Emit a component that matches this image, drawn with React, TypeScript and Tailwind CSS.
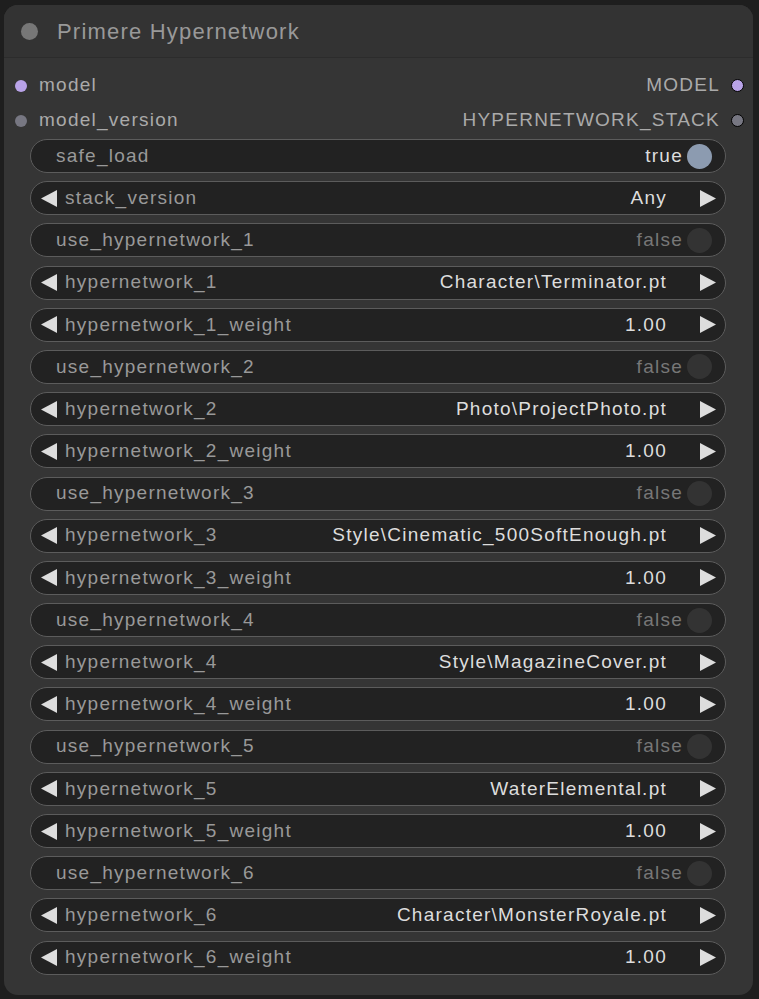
import React from "react";

type Widget =
  | { kind: "toggle"; name: string; value: boolean }
  | { kind: "combo"; name: string; value: string };

const widgets: Widget[] = [
  { kind: "toggle", name: "safe_load", value: true },
  { kind: "combo", name: "stack_version", value: "Any" },
];

for (let i = 1; i <= 6; i++) {
  const files = [
    "Character\\Terminator.pt",
    "Photo\\ProjectPhoto.pt",
    "Style\\Cinematic_500SoftEnough.pt",
    "Style\\MagazineCover.pt",
    "WaterElemental.pt",
    "Character\\MonsterRoyale.pt",
  ];
  widgets.push({ kind: "toggle", name: `use_hypernetwork_${i}`, value: false });
  widgets.push({ kind: "combo", name: `hypernetwork_${i}`, value: files[i - 1] });
  widgets.push({ kind: "combo", name: `hypernetwork_${i}_weight`, value: "1.00" });
}

function LeftArrow() {
  return (
    <svg width="17" height="17" viewBox="0 0 17 17" className="shrink-0">
      <polygon points="16,0 16,17 0,8.5" fill="#dddddd" />
    </svg>
  );
}

function RightArrow() {
  return (
    <svg width="17" height="17" viewBox="0 0 17 17" className="shrink-0">
      <polygon points="1,0 1,17 17,8.5" fill="#dddddd" />
    </svg>
  );
}

function WidgetRow({ w }: { w: Widget }) {
  if (w.kind === "toggle") {
    return (
      <div className="flex h-[34px] items-center rounded-full border border-[#5c5c5c] bg-[#222222] pl-[25px] pr-[13px]">
        <span className="flex-1 text-[#999999]">{w.name}</span>
        <span className={w.value ? "text-[#dddddd]" : "text-[#777777]"}>{w.value ? "true" : "false"}</span>
        <span
          className={
            w.value
              ? "ml-[4px] h-[25px] w-[25px] rounded-full bg-[#8c9bb0]"
              : "ml-[4px] h-[25px] w-[25px] rounded-full bg-[#333333]"
          }
        />
      </div>
    );
  }
  return (
    <div className="flex h-[34px] items-center rounded-full border border-[#5c5c5c] bg-[#222222] pl-[10px] pr-[9px]">
      <LeftArrow />
      <span className="ml-[7px] flex-1 text-[#999999]">{w.name}</span>
      <span className="mr-[32px] text-[#dddddd]">{w.value}</span>
      <RightArrow />
    </div>
  );
}

export default function App() {
  return (
    <div className="min-h-[999px] bg-[#1e1e1e] pl-[4px] pt-[5px] font-['Liberation_Sans',Arial,sans-serif] text-[19px] tracking-[1.25px]">
      <div className="h-[990px] w-[749px] overflow-hidden rounded-[14px] bg-[#353535]">
        {/* title */}
        <div className="flex h-[53px] items-center border-b border-[#2c2c2c] bg-[#333333] pl-[17px]">
          <span className="h-[17px] w-[17px] rounded-full bg-[#777777]" />
          <span className="ml-[19px] text-[22px] tracking-[1.2px] text-[#999999]">Primere Hypernetwork</span>
        </div>
        {/* slots */}
        <div className="flex flex-col pt-[10px]">
          <div className="flex h-[35px] items-center pl-[11px] pr-[9px]">
            <span className="h-[12px] w-[12px] rounded-full bg-[#b9a3e8]" />
            <span className="ml-[12px] flex-1 text-[#aaaaaa]">model</span>
            <span className="text-[#aaaaaa]">MODEL</span>
            <span className="ml-[11px] h-[13px] w-[13px] rounded-full border border-black bg-[#b9a3e8]" />
          </div>
          <div className="flex h-[35px] items-center pl-[11px] pr-[9px]">
            <span className="h-[12px] w-[12px] rounded-full bg-[#777782]" />
            <span className="ml-[12px] flex-1 text-[#aaaaaa]">model_version</span>
            <span className="text-[#aaaaaa]">HYPERNETWORK_STACK</span>
            <span className="ml-[11px] h-[13px] w-[13px] rounded-full border border-black bg-[#777782]" />
          </div>
        </div>
        {/* widgets */}
        <div className="mt-[1px] flex flex-col gap-[8.2px] pl-[26px] pr-[27px]">
          {widgets.map((w) => (
            <WidgetRow key={w.name} w={w} />
          ))}
        </div>
      </div>
    </div>
  );
}
